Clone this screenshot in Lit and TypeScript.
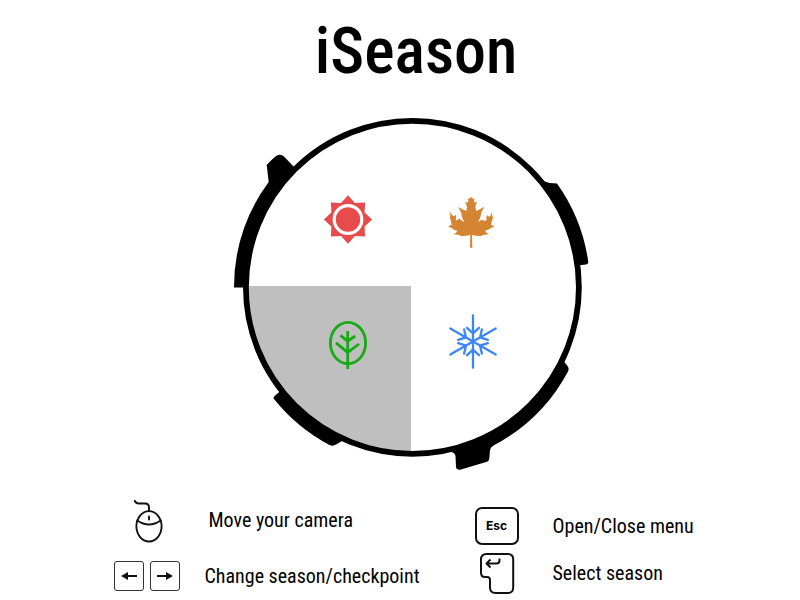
import { LitElement, html, css, svg } from "lit";
import { customElement, state } from "lit/decorators.js";

type Season = "summer" | "autumn" | "spring" | "winter";

const starPoints = (cx: number, cy: number, outer: number, inner: number) =>
  Array.from({ length: 16 }, (_, i) => {
    const r = i % 2 ? inner : outer;
    const a = (i * Math.PI) / 8;
    return `${(cx + r * Math.sin(a)).toFixed(1)},${(cy - r * Math.cos(a)).toFixed(1)}`;
  }).join(" ");

const sun = html`<svg class="glyph" viewBox="318 193 64 64" aria-hidden="true">
  <polygon points=${starPoints(348, 219.5, 24.2, 18)} fill="#e84b4b" />
  <circle cx="348" cy="219.5" r="13.8" fill="none" stroke="#fff" stroke-width="3.2" />
</svg>`;

const maple = html`<svg class="glyph" viewBox="126 249 192 192" aria-hidden="true">
  <path
    fill="#d58532"
    d="M213 260L218 266L223 265L222 276Q228 279 232 275Q226 285 226 292L229 303Q239 298 253 290Q245 303 244 310Q243 322 233 337Q243 328 250 331Q254 334 260 331Q257 325 261 316L268 320Q274 314 276 305Q275 315 279 324Q274 335 273 344Q278 345 283 350Q272 352 269 357Q261 361 255 362Q260 370 267 373Q250 374 243 378Q230 379 216 375L217 413H210L211 375Q196 379 184 378Q175 374 160 373Q169 370 172 362Q160 360 156 355Q152 352 145 350Q150 345 155 344Q154 334 150 324Q153 315 148 304Q154 314 160 319L168 315Q169 325 167 330Q173 333 177 325Q182 331 194 337Q184 322 184 310Q180 300 174 291Q188 298 199 303L201 292Q200 285 195 275Q200 279 205 276L204 265L209 266Z"
  />
</svg>`;

const tree = html`<svg class="glyph" viewBox="318 317 64 64" aria-hidden="true">
  <g fill="none" stroke="#14ab14" stroke-width="2.8">
    <ellipse cx="348" cy="343" rx="17.6" ry="20.7" />
    <path d="M347.7 331V369M340.5 335.3L347.7 341.2L355.2 336M336 342.8L347.7 352.4L359 344" />
  </g>
</svg>`;

const snowflake = html`<svg class="glyph" viewBox="442 317 64 64" aria-hidden="true">
  <g fill="none" stroke="#3d86f8" stroke-width="2.3" stroke-linecap="round">
    ${[0, 60, 120, 180, 240, 300].map(
      (a) => svg`<path transform="rotate(${a} 473 341.5)" d="M473 341.5V315.3M467 327.8L473 333.4L479 327.8" />`
    )}
  </g>
</svg>`;

const seasons: { id: Season; label: string; icon: unknown }[] = [
  { id: "summer", label: "Summer", icon: sun },
  { id: "autumn", label: "Autumn", icon: maple },
  { id: "spring", label: "Spring", icon: tree },
  { id: "winter", label: "Winter", icon: snowflake },
];

// Clockwise rotation of the lower-left quarter that reaches each season.
const quarterTurn: Record<Season, number> = { spring: 0, summer: 90, autumn: 180, winter: 270 };

@customElement("season-dial")
export class SeasonDial extends LitElement {
  static styles = css`
    :host {
      display: grid;
      place-items: center;
    }
    .ring,
    .choices {
      grid-area: 1 / 1;
    }
    .ring {
      width: 360px;
      height: 370px;
    }
    .choices {
      display: grid;
      grid-template-columns: repeat(2, 124px);
      grid-auto-rows: 124px;
    }
    .choice {
      display: grid;
      place-items: center;
      padding: 0;
      border: 0;
      background: none;
      cursor: pointer;
    }
    .glyph {
      display: block;
      width: 64px;
      height: 64px;
      overflow: visible;
    }
  `;

  @state() private current: Season = "spring";

  render() {
    return html`
      <svg class="ring" viewBox="232 102 360 370" aria-hidden="true">
        <path
          fill="#bfbfbf"
          transform="rotate(${quarterTurn[this.current]} 412 287)"
          d="M411 286V453A166 166 0 0 1 246 286Z"
        />
        <circle cx="412.4" cy="287.3" r="166.5" fill="none" stroke="#000" stroke-width="5.8" />
        <path
          d="M234 287.5A178 178 0 0 1 268.7 182L266.7 165Q274 157 277.5 155.2Q281 153.8 284.5 157L294 167L297 169A165 165 0 0 0 247 287.5Z"
        />
        <path
          d="M543 181Q549 183.5 557 183.5A178 178 0 0 1 588.3 262Q588.5 264.5 586 264.5L577 265.5A166 166 0 0 0 543 184Z"
        />
        <path
          d="M281 390.5L274 396.5Q273 398 274 399A178 178 0 0 0 329.5 445Q333 446.5 336 444.5L343 440.5A168 168 0 0 1 281 390.5Z"
        />
        <path
          d="M563.5 361L567.5 366Q569.5 368.5 568 371.5A178 178 0 0 1 493.5 445.5Q490.5 447 490 450L489.3 458.5Q489 461 487 461.7L461 469.6Q456.5 470.5 456 467L455.5 456Q455 452.5 450 451.5A168 168 0 0 0 563.5 361Z"
        />
      </svg>
      <div class="choices">
        ${seasons.map(
          (s) => html`<button
            class="choice"
            type="button"
            aria-label=${s.label}
            aria-pressed=${this.current === s.id ? "true" : "false"}
            @click=${() => (this.current = s.id)}
          >
            ${s.icon}
          </button>`
        )}
      </div>
    `;
  }
}

@customElement("app-root")
export class AppRoot extends LitElement {
  static styles = css`
    :host {
      display: block;
      min-height: 100vh;
      box-sizing: border-box;
      padding-left: 8px;
      background: #fff;
      color: #000;
      font-family: "Roboto Condensed", "Liberation Sans", sans-serif;
    }
    .title {
      margin: 0;
      padding: 8px 0 6px 24px;
      font-size: 64px;
      line-height: 88px;
      font-weight: 500;
      text-align: center;
    }
    .dial {
      margin-left: 16px;
    }
    .help {
      display: flex;
      flex-wrap: wrap;
      justify-content: center;
      align-items: center;
      gap: 58px;
      margin-top: 24px;
    }
    .list {
      display: grid;
      margin: 0;
      padding: 0;
      list-style: none;
      font-size: 20px;
      line-height: 28px;
      white-space: nowrap;
    }
    .left {
      grid-template-columns: 66px 212px;
      grid-auto-rows: 48px;
      gap: 8px 25px;
    }
    .right {
      grid-template-columns: 44px 142px;
      grid-auto-rows: 42px;
      gap: 5px 34px;
      padding-top: 3px;
    }
    .item {
      display: grid;
      grid-column: 1 / -1;
      grid-template-columns: subgrid;
      align-items: center;
    }
    .left .item:first-child .label {
      padding-left: 4px;
    }
    .keys {
      display: flex;
      justify-content: space-between;
    }
    .key {
      display: grid;
      place-items: center;
      box-sizing: border-box;
      width: 30px;
      height: 30px;
      border: 1px solid #333;
      border-radius: 3px;
    }
    .esc {
      width: 44px;
      height: 38px;
      border: 2px solid #111;
      border-radius: 7px;
      font: 700 12px/16px Inter, "Liberation Sans", sans-serif;
    }
    .arrow {
      width: 18px;
      height: 10px;
    }
    .mouse {
      width: 66px;
      height: 48px;
    }
    .enter {
      width: 44px;
      height: 42px;
    }
  `;

  render() {
    return html`
      <h1 class="title">iSeason</h1>
      <season-dial class="dial"></season-dial>
      <div class="help">
        <ul class="list left">
          <li class="item">
            <svg class="mouse" viewBox="114 496 66 48" aria-hidden="true">
              <g fill="none" stroke="#111" stroke-width="1.9" stroke-linecap="round">
                <ellipse cx="149" cy="526.3" rx="12.6" ry="15.2" />
                <path d="M149 511V507.5Q149 503.5 145 503.5H139Q136 503.5 134.8 500.8M137.3 520.5Q149 528.5 160.7 520.5M149 516.5V519.5" />
              </g>
            </svg>
            <span class="label">Move your camera</span>
          </li>
          <li class="item">
            <span class="keys">
              <kbd class="key" aria-label="Left arrow">
                <svg class="arrow" viewBox="0 0 18 10"><path d="M1 5L8 1V9ZM7 4H17V6H7Z" fill="#111" /></svg>
              </kbd>
              <kbd class="key" aria-label="Right arrow">
                <svg class="arrow" viewBox="0 0 18 10"><path d="M17 5L10 1V9ZM11 4H1V6H11Z" fill="#111" /></svg>
              </kbd>
            </span>
            <span class="label">Change season/checkpoint</span>
          </li>
        </ul>
        <ul class="list right">
          <li class="item">
            <kbd class="key esc">Esc</kbd>
            <span class="label">Open/Close menu</span>
          </li>
          <li class="item">
            <svg class="enter" viewBox="475 552 44 42" aria-hidden="true">
              <g fill="none" stroke="#111" stroke-width="2" stroke-linejoin="round">
                <path d="M486.5 554H508Q513.2 554 513.2 559.5V587.5Q513.2 593 508 593H495.5Q490 593 490 587.5V580Q490 577 487 577H485Q481 577 481 572.5V559.5Q481 554 486.5 554Z" />
                <path d="M499.5 558.5V560.5Q499.5 563.5 496.5 563.5H487M490.5 559.5L486.5 563.5L490.5 567.5" />
              </g>
            </svg>
            <span class="label">Select season</span>
          </li>
        </ul>
      </div>
    `;
  }
}
